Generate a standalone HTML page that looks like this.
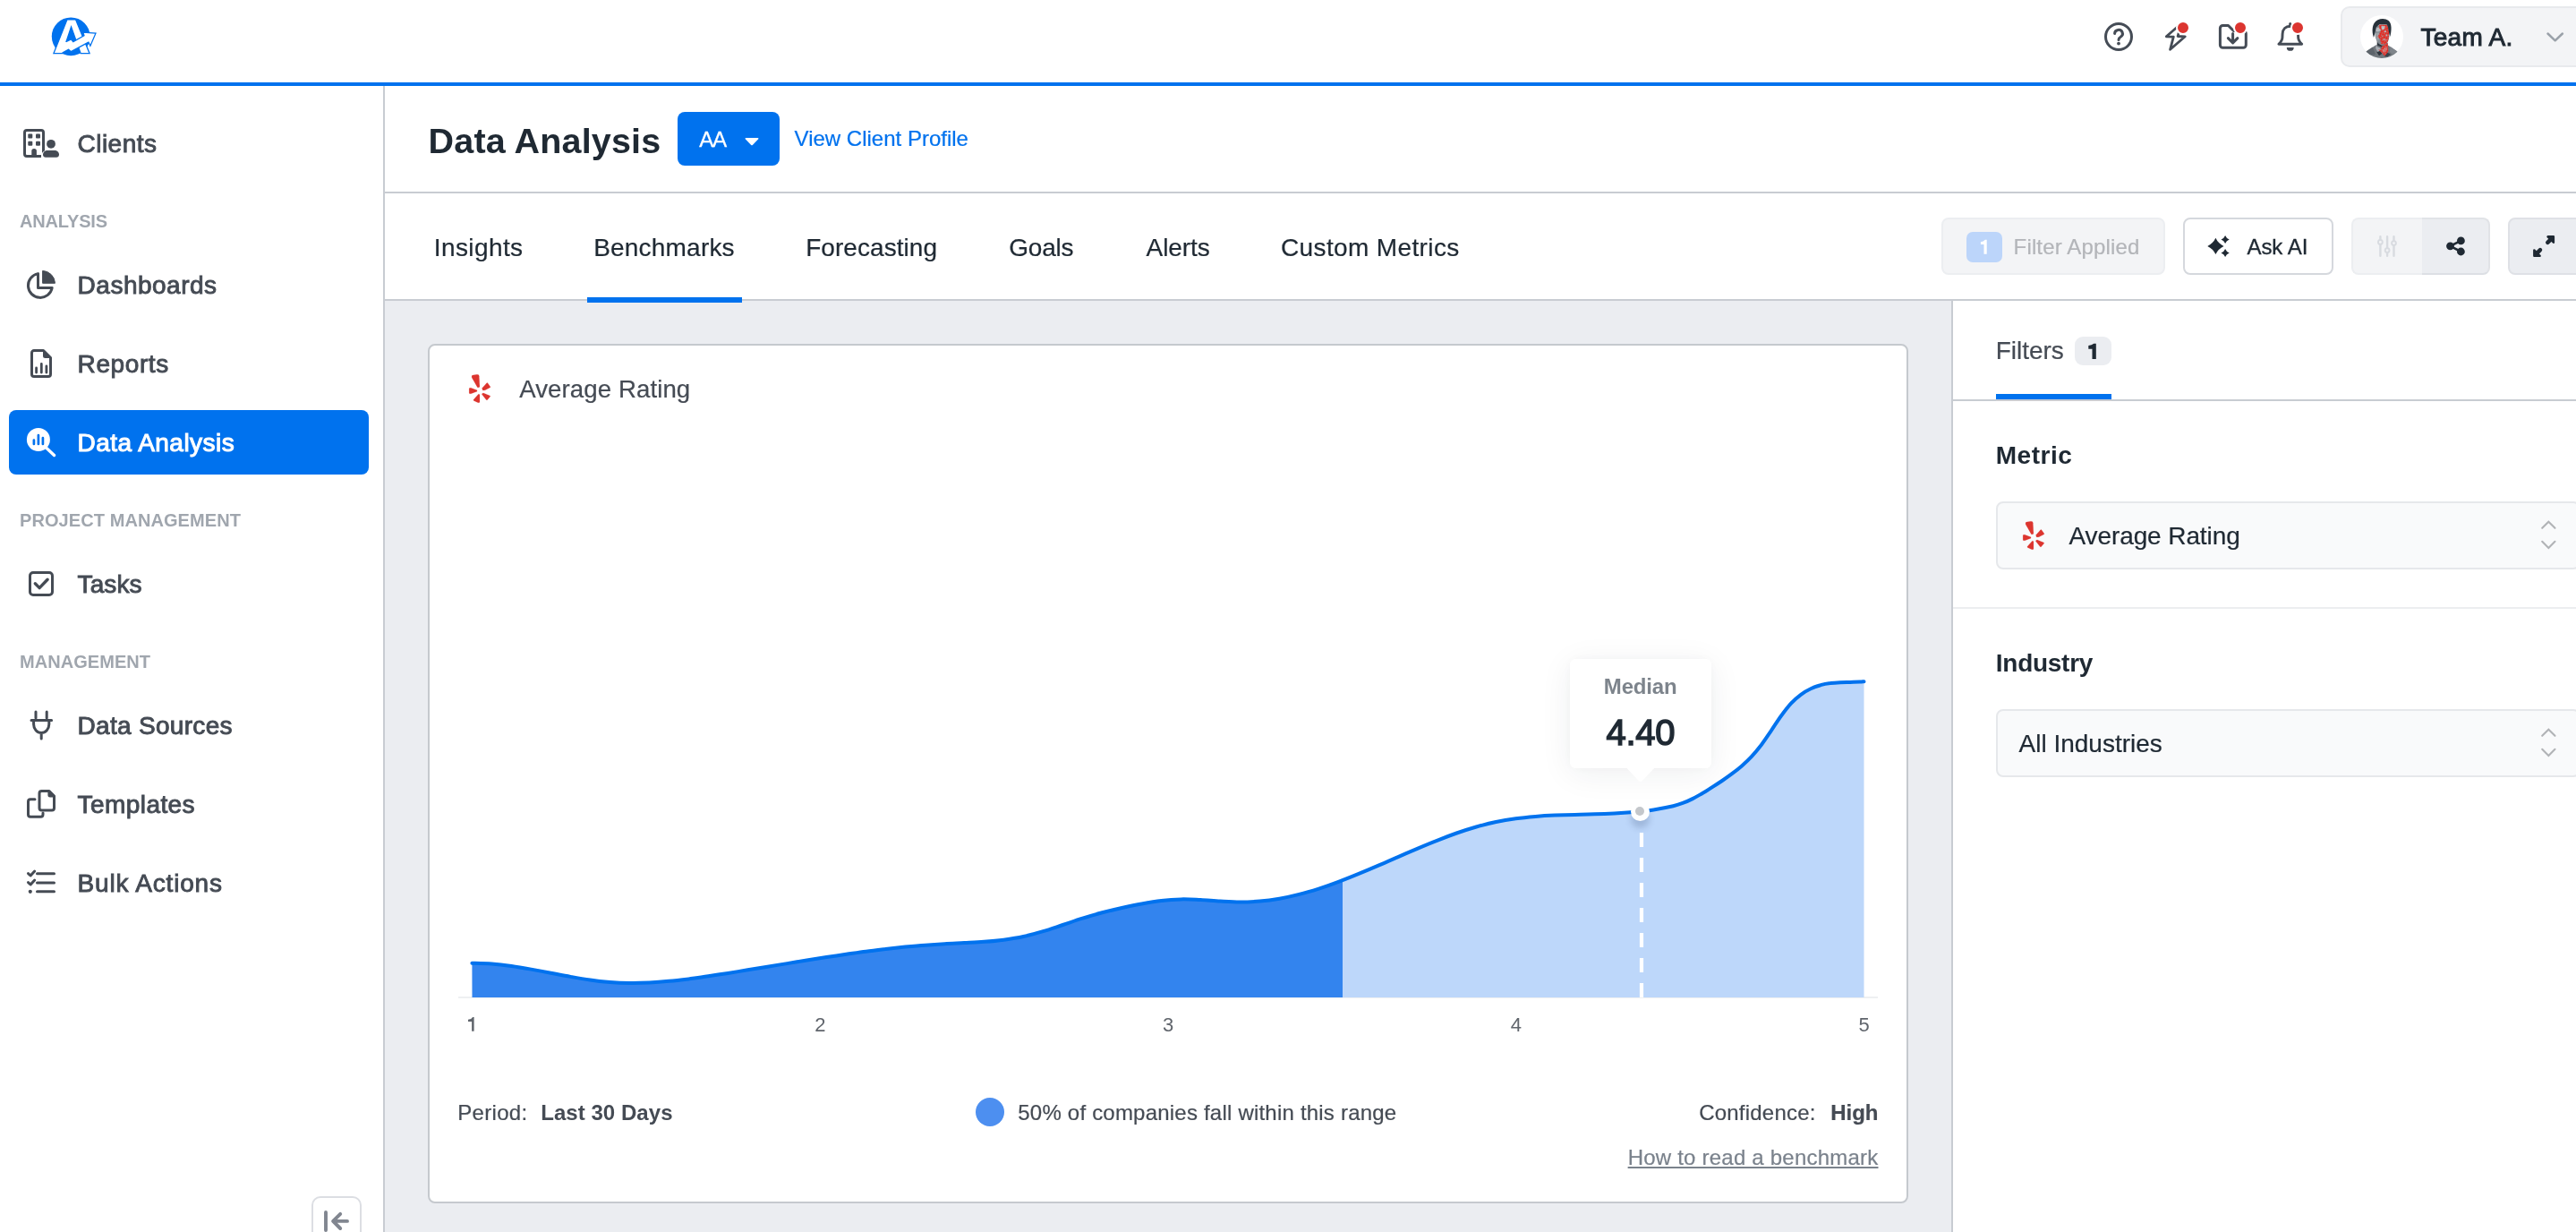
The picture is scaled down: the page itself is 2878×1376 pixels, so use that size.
<!DOCTYPE html><html><head><meta charset="utf-8"><title>Data Analysis</title>
<style>html,body{margin:0;padding:0}body{width:2878px;height:1376px;position:relative;background:#fff;font-family:"Liberation Sans",sans-serif;}div{box-sizing:border-box}#w{position:absolute;left:0;top:0;width:2878px;height:1376px;overflow:hidden;will-change:transform;}</style></head><body><div id="w">
<div style="position:absolute;left:430px;top:336px;width:1750px;height:1040px;background:#ebedf1;"></div>
<div style="position:absolute;left:0px;top:92px;width:2878px;height:4px;background:#0072ee;"></div>
<div style="position:absolute;left:428px;top:96px;width:2px;height:1280px;background:#c8ccd2;"></div>
<div style="position:absolute;left:430px;top:214px;width:2448px;height:2px;background:#c8ccd2;"></div>
<div style="position:absolute;left:430px;top:334px;width:2448px;height:2px;background:#c8ccd2;"></div>
<div style="position:absolute;left:2180px;top:336px;width:2px;height:1040px;background:#c8ccd2;"></div>
<div style="position:absolute;left:2182px;top:336px;width:696px;height:1040px;background:#fff;"></div>
<svg style="position:absolute;left:0px;top:0px;overflow:visible;" width="120" height="92" viewBox="0 0 120 92"><circle cx="79.2" cy="40.8" r="21.4" fill="#0072ee"/><polygon points="59.89,59.66 74.90,21.92 84.64,21.92 100.06,59.66 90.16,59.66 79.53,30.03 69.63,59.66" fill="#fff" stroke="#0072ee" stroke-width="1.3" stroke-linejoin="miter"/><polygon points="73.69,46.67 79.37,43.83 81.80,46.67 93.98,39.77 92.76,36.12 106.96,37.18 100.88,51.14 98.85,47.08 79.37,57.63 76.53,55.19 69.63,59.09 65.97,59.09 71.25,46.67" fill="#fff"/><polyline points="73.69,46.67 79.37,43.83 81.80,46.67 93.98,39.77 92.76,36.12 106.96,37.18 100.88,51.14 98.85,47.08 79.37,57.63 76.53,55.19 69.63,59.09" fill="none" stroke="#0072ee" stroke-width="1.3"/></svg>
<svg style="position:absolute;left:2351px;top:25px;overflow:visible;" width="32" height="32" viewBox="0 0 32 32"><circle cx="16" cy="16" r="14.5" fill="none" stroke="#454c56" stroke-width="3"/><path d="M11.6 12.6a4.4 4.2 0 1 1 6.6 3.6c-1.4 .8-2.2 1.6-2.2 3.2" fill="none" stroke="#454c56" stroke-width="3" stroke-linecap="round"/><circle cx="16" cy="23.6" r="1.9" fill="#454c56"/></svg>
<svg style="position:absolute;left:0px;top:0px;overflow:visible;" width="1" height="1" viewBox="0 0 1 1"><path d="M2420.300 40.800L2437 26.300L2433.100 40.500L2441.300 40.800L2424.600 55.300L2428.300 41.100Z" fill="none" stroke="#454c56" stroke-width="2.800" stroke-linejoin="round" stroke-linecap="round"/></svg>
<svg style="position:absolute;left:2479px;top:25px;overflow:visible;" width="32" height="32" viewBox="0 0 32 32"><path d="M4.400 3.500h6.100l6 6h10.800a3 3 0 0 1 3 3v12.750a3 3 0 0 1-3 3h-22.900a3 3 0 0 1-3-3v-18.750a3 3 0 0 1 3-3z" fill="none" stroke="#454c56" stroke-width="3" stroke-linejoin="round"/><path d="M15.600 12.400v10.200M10.350 17.600l5.250 5.250 5.250-5.250" fill="none" stroke="#454c56" stroke-width="3" stroke-linecap="round" stroke-linejoin="round"/></svg>
<svg style="position:absolute;left:2543px;top:25px;overflow:visible;" width="32" height="32" viewBox="0 0 32 32"><path d="M15.800 4.300c-5.200 0-8.500 3.400-8.700 8.600l-.2 4.300c-.1 2.600-1.500 4.500-4 7.100h25.800c-2.500-2.600-3.900-4.500-4-7.100l-.2-4.300c-.2-5.200-3.500-8.600-8.700-8.600z" fill="none" stroke="#454c56" stroke-width="2.900" stroke-linejoin="round"/><path d="M15.700 1.500v2.400" stroke="#454c56" stroke-width="3" stroke-linecap="round"/><path d="M11.800 27.900h7.900a3.950 3.900 0 0 1-7.900 0z" fill="#454c56"/></svg>
<div style="position:absolute;left:2431px;top:22.8px;width:16px;height:16px;background:#dc3530;border-radius:50%;border:2px solid #fff;"></div>
<div style="position:absolute;left:2495px;top:22.8px;width:16px;height:16px;background:#dc3530;border-radius:50%;border:2px solid #fff;"></div>
<div style="position:absolute;left:2559px;top:22.8px;width:16px;height:16px;background:#dc3530;border-radius:50%;border:2px solid #fff;"></div>
<div style="position:absolute;left:2615px;top:7px;width:300px;height:68px;background:#f3f4f6;border:2px solid #e8eaed;border-radius:10px;"></div>
<div style="position:absolute;left:2637px;top:17px;width:48px;height:48px;background:#fff;border-radius:50%;"></div>
<svg style="position:absolute;left:2637px;top:17px;overflow:visible;" width="48" height="48" viewBox="0 0 48 48"><defs><clipPath id="avc"><circle cx="24" cy="24" r="24"/></clipPath><pattern id="rp" width="2.600" height="2.600" patternUnits="userSpaceOnUse" patternTransform="rotate(18)"><rect width="2.600" height="2.600" fill="#e8261d"/><rect x=".2" y=".3" width="1.150" height="1.150" fill="#9aa0a6"/></pattern></defs><g clip-path="url(#avc)"><path d="M6.2 40.800L17.600 33.200H30.600L41.700 40.800C38 45.500 31 48.500 24 48.500S10 45.500 6.200 40.800Z" fill="#70767c"/><path d="M6.200 40.800L14 35.600L17 44L9.500 44.500Z" fill="#5d646b"/><path d="M33.500 35L41.700 40.800L38 45L33 41Z" fill="#7f858b"/><path d="M17.600 33.200L21 34L24.800 42.600L19.600 41.200L17.200 37Z" fill="#a9adb2"/><path d="M18.300 41.200L22.500 39.800L24.500 42.800L21 45.200Z" fill="#2d353d"/><path d="M26.500 46L30 41.500L34 43.500L30.500 46.500Z" fill="#3a424a"/><path d="M18.600 28H30.300V35.500L24.500 37.500L18.600 35Z" fill="#6a7077"/><path d="M19 30.500C21 33.600 27 34.800 30.300 31V34L25 36L19 33.500Z" fill="#2b333b"/><path d="M24.200 34.500L30.800 31.200L31.400 40.500L27.200 45.800L24.600 42.400L20.200 38.600L23 38.500Z" fill="url(#rp)"/><path d="M27.300 36.500v5M29 35.500v4M25.600 38v3" stroke="#c9ccd0" stroke-width=".7"/><path d="M16.400 13.500C16 20 16.600 26.500 19.200 29.700L22.300 32.700C24 34.200 26.600 34.200 28.200 32.700L30.600 29.700C32.800 26 33 20 32 13.500C29 9.800 19.500 9.800 16.400 13.500Z" fill="#868c92"/><path d="M17.500 14.500L23.500 12.800L24.200 17L19.500 18.500L17.300 17.500Z" fill="#b9bcc1"/><path d="M17.300 20L21 19.500L21.500 24.500L19.800 29L17.800 25Z" fill="#9da2a7"/><path d="M21 10.500L29.800 10.800C32.600 15.500 33 23 30.800 29.300L28.200 32.700L23.200 32L22 26.500L19.400 24L21.300 20.800L23 16.500L20.800 14Z" fill="url(#rp)"/><path d="M23.500 12L27.800 12.200L27 15.800L24 16.200Z" fill="#bcbfc3"/><path d="M26.500 17.500l2.200-.4.300 2-2.200.5zM28.500 21.500l2 .2-.3 1.800-1.800-.4zM25.500 26.500l2.300-.2v1.300l-2.300.3zM24 22.500l1.200.8-.8 1.200zM27.800 28.400l1.200-1.600.6 1.500z" fill="#b3b7bb"/><path d="M15 25C12.600 18 12.800 8.500 19.500 5.200C23.500 3.300 28.500 3.600 31.500 6C35.600 9.200 35 17.500 33.300 24L31.900 18.500L31 13.200L29.600 10.400L21.500 10.200L17.800 13.200L16.600 19Z" fill="#27313a"/></g></svg>
<div style="position:absolute;top:28px;font-size:28px;line-height:28px;color:#1f2933;white-space:nowrap;left:2704.50px;letter-spacing:0.25px;-webkit-text-stroke:1.0px #1f2933;">Team A.</div>
<svg style="position:absolute;left:2845px;top:36px;overflow:visible;" width="20" height="11" viewBox="0 0 20 11"><path d="M1.500 1.500l8.200 7.800 8.200-7.800" fill="none" stroke="#9aa1a9" stroke-width="2.500" stroke-linecap="round" stroke-linejoin="round"/></svg>
<div style="position:absolute;left:10px;top:458px;width:402px;height:72px;background:#0072ee;border-radius:8px;"></div>
<div style="position:absolute;top:147px;font-size:28px;line-height:28px;color:#454b54;white-space:nowrap;left:86.60px;letter-spacing:0.45px;-webkit-text-stroke:0.9px #454b54;">Clients</div>
<div style="position:absolute;top:305px;font-size:28px;line-height:28px;color:#454b54;white-space:nowrap;left:86.60px;letter-spacing:0.5px;-webkit-text-stroke:0.9px #454b54;">Dashboards</div>
<div style="position:absolute;top:393px;font-size:28px;line-height:28px;color:#454b54;white-space:nowrap;left:86.60px;letter-spacing:0.6px;-webkit-text-stroke:0.9px #454b54;">Reports</div>
<div style="position:absolute;top:481px;font-size:28px;line-height:28px;color:#fff;white-space:nowrap;left:86.60px;letter-spacing:0.45px;-webkit-text-stroke:1.05px #fff;">Data Analysis</div>
<div style="position:absolute;top:639px;font-size:28px;line-height:28px;color:#454b54;white-space:nowrap;left:86.60px;letter-spacing:0.1px;-webkit-text-stroke:0.9px #454b54;">Tasks</div>
<div style="position:absolute;top:797px;font-size:28px;line-height:28px;color:#454b54;white-space:nowrap;left:86.60px;letter-spacing:0.3px;-webkit-text-stroke:0.9px #454b54;">Data Sources</div>
<div style="position:absolute;top:885px;font-size:28px;line-height:28px;color:#454b54;white-space:nowrap;left:86.60px;letter-spacing:0.42px;-webkit-text-stroke:0.9px #454b54;">Templates</div>
<div style="position:absolute;top:973px;font-size:28px;line-height:28px;color:#454b54;white-space:nowrap;left:86.60px;letter-spacing:0.8px;-webkit-text-stroke:0.9px #454b54;">Bulk Actions</div>
<div style="position:absolute;top:237px;font-size:20px;line-height:20px;color:#a0a6ae;white-space:nowrap;left:22.00px;font-weight:bold;letter-spacing:-0.18px;">ANALYSIS</div>
<div style="position:absolute;top:571px;font-size:20px;line-height:20px;color:#a0a6ae;white-space:nowrap;left:22.00px;font-weight:bold;letter-spacing:0.08px;">PROJECT MANAGEMENT</div>
<div style="position:absolute;top:729px;font-size:20px;line-height:20px;color:#a0a6ae;white-space:nowrap;left:22.00px;font-weight:bold;letter-spacing:0.06px;">MANAGEMENT</div>
<svg style="position:absolute;left:24px;top:142px;overflow:visible;" width="44" height="36" viewBox="0 0 44 36"><path d="M24.500 31.500V6a2.500 2.500 0 0 0-2.500-2.500h-16a2.500 2.500 0 0 0-2.500 2.500v24a2.500 2.500 0 0 0 2.500 2.500h16" fill="none" stroke="#454b54" stroke-width="3"/><rect x="7.3" y="7.6" width="5" height="5" rx="1" fill="#454b54"/><rect x="7.3" y="15.8" width="5" height="5" rx="1" fill="#454b54"/><rect x="16" y="7.6" width="5" height="5" rx="1" fill="#454b54"/><rect x="16" y="15.8" width="5" height="5" rx="1" fill="#454b54"/><path d="M11.300 33v-6.200a2.800 2.800 0 0 1 5.600 0v6.200z" fill="#454b54"/><circle cx="33" cy="18.800" r="6.800" fill="#fff"/><path d="M22 34c0-6 4-9.500 11-9.500s11 3.500 11 9.500v2h-22z" fill="#fff"/><circle cx="33" cy="18.800" r="4.900" fill="#454b54"/><path d="M24 30.700c0-2.800 2.400-4.700 5-4.700h8c2.600 0 5 1.900 5 4.700 0 1.800-1.300 3-3 3h-12c-1.700 0-3-1.200-3-3z" fill="#454b54"/></svg>
<svg style="position:absolute;left:0px;top:0px;overflow:visible;" width="1" height="1" viewBox="0 0 1 1"><path d="M42.500 305.620A13.500 13.500 0 1 0 58.190 321.500L42.500 321.500Z" fill="none" stroke="#454b54" stroke-width="3" stroke-linejoin="round"/><path d="M47.600 316.300V302.450A14.350 14.350 0 0 1 61.450 316.300Z" fill="#454b54" stroke="#454b54" stroke-width="1" stroke-linejoin="round"/></svg>
<svg style="position:absolute;left:34px;top:390px;overflow:visible;" width="24" height="32" viewBox="0 0 24 32"><path d="M4 1.500h10.500l8 8v18.500a2.500 2.500 0 0 1-2.500 2.500h-16a2.500 2.500 0 0 1-2.500-2.500v-24a2.500 2.500 0 0 1 2.500-2.500z" fill="none" stroke="#454b54" stroke-width="3" stroke-linejoin="round"/><path d="M14 1.500l8.500 8.500h-6a2.500 2.500 0 0 1-2.500-2.500z" fill="#454b54"/><path d="M6.600 21v5M12.300 16.500v9.500M17.900 19v7" stroke="#454b54" stroke-width="2.800" stroke-linecap="round"/></svg>
<svg style="position:absolute;left:28px;top:476px;overflow:visible;" width="36" height="36" viewBox="0 0 36 36"><circle cx="14.900" cy="15" r="13" fill="#fff"/><path d="M24 24.500l8.500 8" stroke="#fff" stroke-width="3.400" stroke-linecap="round"/><path d="M9.900 15.500v4.500M14.900 10v10M19.900 13v7" stroke="#0072ee" stroke-width="2.700" stroke-linecap="round"/></svg>
<svg style="position:absolute;left:32px;top:638px;overflow:visible;" width="28" height="28" viewBox="0 0 28 28"><rect x="1.500" y="1.500" width="25" height="25" rx="3.500" fill="none" stroke="#454b54" stroke-width="3"/><path d="M7.300 13.800l4.800 4.800 9-9.300" fill="none" stroke="#454b54" stroke-width="3.400" stroke-linecap="round" stroke-linejoin="round"/></svg>
<svg style="position:absolute;left:32px;top:792px;overflow:visible;" width="28" height="36" viewBox="0 0 28 36"><path d="M8 3v7M20.200 3v7M3 12.400h22.600M5.600 12.400v4.600a8.600 9.500 0 0 0 17.200 0v-4.600M14.200 27v6" fill="none" stroke="#454b54" stroke-width="3" stroke-linecap="round"/></svg>
<svg style="position:absolute;left:28px;top:880px;overflow:visible;" width="36" height="36" viewBox="0 0 36 36"><path d="M18 3.500h9l5.500 5.500v13.500a2.500 2.500 0 0 1-2.500 2.500h-11.500a2.500 2.500 0 0 1-2.500-2.500v-16.500a2.500 2.500 0 0 1 2.500-2.500z" fill="none" stroke="#454b54" stroke-width="3" stroke-linejoin="round"/><path d="M25.400 2.800l7.800 7.800h-5.300a2.500 2.500 0 0 1-2.500-2.500z" fill="#454b54"/><path d="M11 12.800h-5a2.500 2.500 0 0 0-2.500 2.500v14.500a2.500 2.500 0 0 0 2.500 2.500h11.500a2.500 2.500 0 0 0 2.500-2.500v-1.800" fill="none" stroke="#454b54" stroke-width="3" stroke-linecap="round"/></svg>
<svg style="position:absolute;left:28px;top:968px;overflow:visible;" width="36" height="36" viewBox="0 0 36 36"><path d="M13.500 7.700h19M13.500 17.900h19M13.500 27.800h19" stroke="#454b54" stroke-width="3" stroke-linecap="round"/><path d="M3.500 7.600l2.600 2.400 4.600-5M3.500 17.600l2.600 2.400 4.600-5" fill="none" stroke="#454b54" stroke-width="3" stroke-linecap="round" stroke-linejoin="round"/><circle cx="5.800" cy="27.800" r="2.100" fill="#454b54"/></svg>
<div style="position:absolute;left:348px;top:1336px;width:56px;height:60px;background:#fff;border:2px solid #dcdee3;border-radius:10px;"></div>
<svg style="position:absolute;left:0px;top:0px;overflow:visible;" width="1" height="1" viewBox="0 0 1 1"><path d="M364 1354V1374M388 1363.900H372.500M380.200 1355.800L372.100 1363.900L380.200 1372" fill="none" stroke="#818690" stroke-width="3.900" stroke-linecap="round" stroke-linejoin="round"/></svg>
<div style="position:absolute;top:138px;font-size:39.5px;line-height:39.5px;color:#1f2933;white-space:nowrap;left:478.60px;font-weight:bold;letter-spacing:0.17px;">Data Analysis</div>
<div style="position:absolute;left:757px;top:125px;width:114px;height:60px;background:#0072ee;border-radius:8px;"></div>
<div style="position:absolute;top:144px;font-size:24.2px;line-height:24.2px;color:#fff;white-space:nowrap;left:781.20px;letter-spacing:-1.3px;-webkit-text-stroke:0.3px #fff;">AA</div>
<svg style="position:absolute;left:832px;top:152.5px;overflow:visible;" width="16" height="9.5" viewBox="0 0 16 9.5"><path d="M1.300 1h13.400a.8.800 0 0 1 .6 1.300l-6.500 6.600a1.100 1.100 0 0 1-1.600 0l-6.500-6.600a.8.800 0 0 1 .6-1.300z" fill="#fff"/></svg>
<div style="position:absolute;top:143px;font-size:24px;line-height:24px;color:#0072ee;white-space:nowrap;left:887.60px;-webkit-text-stroke:0.22px #0072ee;">View Client Profile</div>
<div style="position:absolute;top:263px;font-size:28px;line-height:28px;color:#1f2933;white-space:nowrap;left:484.80px;letter-spacing:0.4px;-webkit-text-stroke:0.22px #1f2933;">Insights</div>
<div style="position:absolute;top:263px;font-size:28px;line-height:28px;color:#1f2933;white-space:nowrap;left:663.20px;letter-spacing:0.2px;-webkit-text-stroke:0.22px #1f2933;">Benchmarks</div>
<div style="position:absolute;top:263px;font-size:28px;line-height:28px;color:#1f2933;white-space:nowrap;left:900.20px;letter-spacing:0.05px;-webkit-text-stroke:0.22px #1f2933;">Forecasting</div>
<div style="position:absolute;top:263px;font-size:28px;line-height:28px;color:#1f2933;white-space:nowrap;left:1127.20px;letter-spacing:-0.2px;-webkit-text-stroke:0.22px #1f2933;">Goals</div>
<div style="position:absolute;top:263px;font-size:28px;line-height:28px;color:#1f2933;white-space:nowrap;left:1280.50px;letter-spacing:-0.05px;-webkit-text-stroke:0.22px #1f2933;">Alerts</div>
<div style="position:absolute;top:263px;font-size:28px;line-height:28px;color:#1f2933;white-space:nowrap;left:1431.00px;letter-spacing:0.37px;-webkit-text-stroke:0.22px #1f2933;">Custom Metrics</div>
<div style="position:absolute;left:656px;top:332px;width:173px;height:6px;background:#0072ee;"></div>
<div style="position:absolute;left:2169px;top:243px;width:250px;height:64px;background:#f3f4f6;border:2px solid #eceef1;border-radius:8px;"></div>
<div style="position:absolute;left:2197px;top:259px;width:40px;height:34px;background:#bcd5fa;border-radius:7px;"></div>
<svg style="position:absolute;left:0px;top:0px;overflow:visible;" width="1" height="1" viewBox="0 0 1 1"><path d="M2219.70 267.80L2219.70 283.80L2216.50 283.80L2216.50 273.08L2212.90 273.08L2212.90 270.36Q2216.02 270.23 2217.84 267.80Z" fill="#fff"/></svg>
<div style="position:absolute;top:264px;font-size:24px;line-height:24px;color:#b3b5b9;white-space:nowrap;left:2249.60px;letter-spacing:0.15px;-webkit-text-stroke:0.22px #b3b5b9;">Filter Applied</div>
<div style="position:absolute;left:2439px;top:243px;width:168px;height:64px;background:#fff;border:2px solid #d5d8dd;border-radius:8px;"></div>
<svg style="position:absolute;left:0px;top:0px;overflow:visible;" width="1" height="1" viewBox="0 0 1 1"><path d="M2475.40 265.80Q2478.30 272.00 2484.50 274.90Q2478.30 277.80 2475.40 284.00Q2472.50 277.80 2466.30 274.90Q2472.50 272.00 2475.40 265.80ZM2486.10 262.90Q2487.40 266.20 2490.70 267.50Q2487.40 268.80 2486.10 272.10Q2484.80 268.80 2481.50 267.50Q2484.80 266.20 2486.10 262.90ZM2486.10 277.90Q2487.40 281.20 2490.70 282.50Q2487.40 283.80 2486.10 287.10Q2484.80 283.80 2481.50 282.50Q2484.80 281.20 2486.10 277.90Z" fill="#1f2933"/></svg>
<div style="position:absolute;top:264px;font-size:24px;line-height:24px;color:#1f2933;white-space:nowrap;left:2510.40px;letter-spacing:-0.02px;-webkit-text-stroke:0.35px #1f2933;">Ask AI</div>
<div style="position:absolute;left:2627px;top:243px;width:80px;height:64px;background:#f3f4f6;border:2px solid #eceef1;border-right:none;border-radius:8px 0 0 8px;"></div>
<div style="position:absolute;left:2706px;top:243px;width:76px;height:64px;background:#ebedf1;border:2px solid #e1e3e7;border-left:none;border-bottom-color:#dcdfe4;border-radius:0 8px 8px 0;"></div>
<svg style="position:absolute;left:2654px;top:262px;overflow:visible;" width="26" height="26" viewBox="0 0 26 26"><path d="M5.400 2.300v21.400M13.100 2.300v21.400M20.500 2.300v21.400" stroke="#d8dbe0" stroke-width="2.400" stroke-linecap="round"/><circle cx="5.400" cy="8.400" r="2.400" fill="#f3f4f6" stroke="#d8dbe0" stroke-width="1.900"/><circle cx="13.100" cy="17.600" r="2.400" fill="#f3f4f6" stroke="#d8dbe0" stroke-width="1.900"/><circle cx="20.500" cy="9.600" r="2.400" fill="#f3f4f6" stroke="#d8dbe0" stroke-width="1.900"/></svg>
<svg style="position:absolute;left:0px;top:0px;overflow:visible;" width="1" height="1" viewBox="0 0 1 1"><path d="M2749.400 268.900L2737.500 274.800L2749.400 281" fill="none" stroke="#1f2933" stroke-width="2.600"/><circle cx="2749.400" cy="268.900" r="4.400" fill="#1f2933"/><circle cx="2737.500" cy="274.850" r="4.400" fill="#1f2933"/><circle cx="2749.400" cy="281" r="4.400" fill="#1f2933"/></svg>
<div style="position:absolute;left:2802px;top:243px;width:100px;height:64px;background:#ebedf1;border:2px solid #dfe1e6;border-radius:8px;"></div>
<svg style="position:absolute;left:0px;top:0px;overflow:visible;" width="1" height="1" viewBox="0 0 1 1"><g fill="#1f2933" stroke="#1f2933" stroke-linejoin="round" stroke-linecap="round"><path d="M2846.500 264.300h6.400v6.400z" stroke-width="2.400"/><path d="M2831.300 279.400v6.400h6.400z" stroke-width="2.400"/><path d="M2846.300 270.900l4.300-4.300M2838 279.200l-4.400 4.400" stroke-width="4.500" fill="none"/></g></svg>
<div style="position:absolute;left:478px;top:384px;width:1654px;height:960px;background:#fff;border:2px solid #c5c9ce;border-radius:8px;"></div>
<svg style="position:absolute;left:0px;top:0px;overflow:visible;" width="1" height="1" viewBox="0 0 1 1"><polygon points="526.98,419.76 528.20,419.03 533.07,418.14 534.89,418.75 535.30,420.17 535.91,431.94 535.10,432.83 533.47,432.67 527.18,421.79" fill="#dc352f" stroke="#dc352f" stroke-width="0.15" stroke-linejoin="round"/><polygon points="524.14,433.96 524.63,433.23 526.17,433.15 532.86,435.79 533.15,436.60 532.86,437.29 526.17,439.72 524.63,439.72 524.14,439.03" fill="#dc352f" stroke="#dc352f" stroke-width="0.15" stroke-linejoin="round"/><polygon points="534.49,440.13 535.50,440.33 535.91,441.06 535.91,449.18 535.10,449.87 534.08,449.78 529.21,447.55 528.93,446.54" fill="#dc352f" stroke="#dc352f" stroke-width="0.15" stroke-linejoin="round"/><polygon points="538.26,440.25 539.07,439.24 540.17,439.03 547.47,442.00 547.79,442.81 544.43,446.74 543.41,446.86" fill="#dc352f" stroke="#dc352f" stroke-width="0.15" stroke-linejoin="round"/><polygon points="538.87,435.38 538.87,433.35 543.82,427.68 544.63,427.59 547.87,431.94 547.67,432.83 541.99,435.67 539.96,435.91" fill="#dc352f" stroke="#dc352f" stroke-width="0.15" stroke-linejoin="round"/></svg>
<div style="position:absolute;top:421px;font-size:27.6px;line-height:27.6px;color:#454b54;white-space:nowrap;left:580.20px;letter-spacing:0.1px;-webkit-text-stroke:0.22px #454b54;">Average Rating</div>
<svg style="position:absolute;left:0px;top:0px;overflow:visible;" width="2878" height="1376" viewBox="0 0 2878 1376"><defs><clipPath id="cl"><rect x="0" y="0" width="1500" height="1376"/></clipPath><clipPath id="cr"><rect x="1500" y="0" width="1378" height="1376"/></clipPath></defs><rect x="512" y="1113" width="1586" height="2" fill="#eef0f2"/><path d="M527.4 1075.8C531.1 1075.9 542.1 1076.0 549.4 1076.5C556.7 1077.1 564.1 1078.0 571.4 1079.0C578.7 1080.0 586.1 1081.3 593.4 1082.6C600.7 1083.9 608.1 1085.4 615.4 1086.7C622.7 1088.1 630.1 1089.6 637.4 1090.9C644.7 1092.2 652.1 1093.5 659.4 1094.5C666.7 1095.6 674.1 1096.4 681.4 1097.0C688.7 1097.6 696.1 1097.9 703.4 1097.9C710.7 1098.0 718.1 1097.8 725.4 1097.5C732.7 1097.1 740.1 1096.5 747.4 1095.8C754.7 1095.2 762.1 1094.3 769.4 1093.4C776.7 1092.4 784.1 1091.4 791.4 1090.3C798.7 1089.2 806.1 1088.0 813.4 1086.9C820.7 1085.7 828.1 1084.5 835.4 1083.3C842.7 1082.1 850.1 1080.9 857.4 1079.7C864.7 1078.5 872.1 1077.3 879.4 1076.1C886.7 1074.9 894.1 1073.7 901.4 1072.5C908.7 1071.4 916.1 1070.2 923.4 1069.1C930.7 1068.0 938.1 1066.9 945.4 1065.8C952.7 1064.8 960.1 1063.7 967.4 1062.8C974.7 1061.8 982.1 1060.9 989.4 1060.0C996.7 1059.2 1004.1 1058.4 1011.4 1057.6C1018.7 1056.9 1026.1 1056.2 1033.4 1055.7C1040.7 1055.1 1048.1 1054.6 1055.4 1054.2C1062.7 1053.7 1070.1 1053.5 1077.4 1053.1C1084.7 1052.7 1092.1 1052.4 1099.4 1051.8C1106.7 1051.3 1114.1 1050.7 1121.4 1049.7C1128.7 1048.7 1136.1 1047.6 1143.4 1046.0C1150.7 1044.4 1158.1 1042.4 1165.4 1040.2C1172.7 1038.0 1180.1 1035.4 1187.4 1033.0C1194.7 1030.6 1202.1 1027.9 1209.4 1025.7C1216.7 1023.4 1224.1 1021.3 1231.4 1019.3C1238.7 1017.4 1246.1 1015.6 1253.4 1014.0C1260.7 1012.4 1268.1 1010.8 1275.4 1009.5C1282.7 1008.1 1290.1 1006.7 1297.4 1005.9C1304.7 1005.0 1312.1 1004.5 1319.4 1004.4C1326.7 1004.2 1334.1 1004.7 1341.4 1005.0C1348.7 1005.4 1356.1 1006.2 1363.4 1006.6C1370.7 1007.0 1378.1 1007.5 1385.4 1007.5C1392.7 1007.5 1400.1 1007.2 1407.4 1006.6C1414.7 1005.9 1422.1 1004.9 1429.4 1003.7C1436.7 1002.4 1444.1 1000.8 1451.4 998.9C1458.7 997.1 1466.1 994.9 1473.4 992.6C1480.7 990.3 1488.1 987.7 1495.4 984.9C1502.7 982.2 1510.1 979.2 1517.4 976.2C1524.7 973.2 1532.1 970.1 1539.4 966.9C1546.7 963.8 1554.1 960.5 1561.4 957.3C1568.7 954.1 1576.1 950.9 1583.4 947.8C1590.7 944.7 1598.1 941.6 1605.4 938.8C1612.7 935.9 1620.1 933.1 1627.4 930.5C1634.7 928.0 1642.1 925.6 1649.4 923.5C1656.7 921.4 1664.1 919.5 1671.4 918.0C1678.7 916.5 1686.1 915.3 1693.4 914.3C1700.7 913.2 1708.1 912.5 1715.4 911.9C1722.7 911.3 1730.1 910.9 1737.4 910.6C1744.7 910.3 1752.1 910.1 1759.4 909.9C1766.7 909.6 1774.1 909.5 1781.4 909.3C1788.7 909.1 1796.1 908.8 1803.4 908.5C1810.7 908.1 1818.1 907.6 1825.4 907.0C1832.7 906.3 1840.1 905.5 1847.4 904.4C1854.7 903.2 1864.0 901.4 1869.4 900.2C1874.8 898.9 1876.4 898.3 1880.0 896.9C1883.6 895.6 1887.3 894.0 1891.0 892.1C1894.7 890.3 1898.3 888.1 1902.0 886.0C1905.7 883.8 1909.3 881.5 1913.0 879.1C1916.7 876.8 1920.3 874.5 1924.0 872.0C1927.7 869.5 1931.3 867.0 1935.0 864.2C1938.7 861.4 1942.3 858.6 1946.0 855.4C1949.7 852.1 1953.3 848.8 1957.0 844.8C1960.7 840.9 1964.3 836.5 1968.0 831.7C1971.7 826.9 1975.3 821.2 1979.0 815.8C1982.7 810.4 1986.3 804.5 1990.0 799.5C1993.7 794.5 1997.3 789.7 2001.0 785.7C2004.7 781.7 2008.3 778.5 2012.0 775.8C2015.7 773.0 2019.3 770.9 2023.0 769.2C2026.7 767.4 2030.3 766.2 2034.0 765.2C2037.7 764.1 2041.3 763.5 2045.0 763.1C2048.7 762.6 2052.3 762.4 2056.0 762.2C2059.7 762.0 2063.3 762.0 2067.0 761.9C2070.7 761.8 2075.4 761.6 2078.0 761.5C2080.6 761.4 2081.8 761.2 2082.5 761.2L2082.5 1114L527.5 1114Z" fill="#3384ee" clip-path="url(#cl)"/><path d="M527.4 1075.8C531.1 1075.9 542.1 1076.0 549.4 1076.5C556.7 1077.1 564.1 1078.0 571.4 1079.0C578.7 1080.0 586.1 1081.3 593.4 1082.6C600.7 1083.9 608.1 1085.4 615.4 1086.7C622.7 1088.1 630.1 1089.6 637.4 1090.9C644.7 1092.2 652.1 1093.5 659.4 1094.5C666.7 1095.6 674.1 1096.4 681.4 1097.0C688.7 1097.6 696.1 1097.9 703.4 1097.9C710.7 1098.0 718.1 1097.8 725.4 1097.5C732.7 1097.1 740.1 1096.5 747.4 1095.8C754.7 1095.2 762.1 1094.3 769.4 1093.4C776.7 1092.4 784.1 1091.4 791.4 1090.3C798.7 1089.2 806.1 1088.0 813.4 1086.9C820.7 1085.7 828.1 1084.5 835.4 1083.3C842.7 1082.1 850.1 1080.9 857.4 1079.7C864.7 1078.5 872.1 1077.3 879.4 1076.1C886.7 1074.9 894.1 1073.7 901.4 1072.5C908.7 1071.4 916.1 1070.2 923.4 1069.1C930.7 1068.0 938.1 1066.9 945.4 1065.8C952.7 1064.8 960.1 1063.7 967.4 1062.8C974.7 1061.8 982.1 1060.9 989.4 1060.0C996.7 1059.2 1004.1 1058.4 1011.4 1057.6C1018.7 1056.9 1026.1 1056.2 1033.4 1055.7C1040.7 1055.1 1048.1 1054.6 1055.4 1054.2C1062.7 1053.7 1070.1 1053.5 1077.4 1053.1C1084.7 1052.7 1092.1 1052.4 1099.4 1051.8C1106.7 1051.3 1114.1 1050.7 1121.4 1049.7C1128.7 1048.7 1136.1 1047.6 1143.4 1046.0C1150.7 1044.4 1158.1 1042.4 1165.4 1040.2C1172.7 1038.0 1180.1 1035.4 1187.4 1033.0C1194.7 1030.6 1202.1 1027.9 1209.4 1025.7C1216.7 1023.4 1224.1 1021.3 1231.4 1019.3C1238.7 1017.4 1246.1 1015.6 1253.4 1014.0C1260.7 1012.4 1268.1 1010.8 1275.4 1009.5C1282.7 1008.1 1290.1 1006.7 1297.4 1005.9C1304.7 1005.0 1312.1 1004.5 1319.4 1004.4C1326.7 1004.2 1334.1 1004.7 1341.4 1005.0C1348.7 1005.4 1356.1 1006.2 1363.4 1006.6C1370.7 1007.0 1378.1 1007.5 1385.4 1007.5C1392.7 1007.5 1400.1 1007.2 1407.4 1006.6C1414.7 1005.9 1422.1 1004.9 1429.4 1003.7C1436.7 1002.4 1444.1 1000.8 1451.4 998.9C1458.7 997.1 1466.1 994.9 1473.4 992.6C1480.7 990.3 1488.1 987.7 1495.4 984.9C1502.7 982.2 1510.1 979.2 1517.4 976.2C1524.7 973.2 1532.1 970.1 1539.4 966.9C1546.7 963.8 1554.1 960.5 1561.4 957.3C1568.7 954.1 1576.1 950.9 1583.4 947.8C1590.7 944.7 1598.1 941.6 1605.4 938.8C1612.7 935.9 1620.1 933.1 1627.4 930.5C1634.7 928.0 1642.1 925.6 1649.4 923.5C1656.7 921.4 1664.1 919.5 1671.4 918.0C1678.7 916.5 1686.1 915.3 1693.4 914.3C1700.7 913.2 1708.1 912.5 1715.4 911.9C1722.7 911.3 1730.1 910.9 1737.4 910.6C1744.7 910.3 1752.1 910.1 1759.4 909.9C1766.7 909.6 1774.1 909.5 1781.4 909.3C1788.7 909.1 1796.1 908.8 1803.4 908.5C1810.7 908.1 1818.1 907.6 1825.4 907.0C1832.7 906.3 1840.1 905.5 1847.4 904.4C1854.7 903.2 1864.0 901.4 1869.4 900.2C1874.8 898.9 1876.4 898.3 1880.0 896.9C1883.6 895.6 1887.3 894.0 1891.0 892.1C1894.7 890.3 1898.3 888.1 1902.0 886.0C1905.7 883.8 1909.3 881.5 1913.0 879.1C1916.7 876.8 1920.3 874.5 1924.0 872.0C1927.7 869.5 1931.3 867.0 1935.0 864.2C1938.7 861.4 1942.3 858.6 1946.0 855.4C1949.7 852.1 1953.3 848.8 1957.0 844.8C1960.7 840.9 1964.3 836.5 1968.0 831.7C1971.7 826.9 1975.3 821.2 1979.0 815.8C1982.7 810.4 1986.3 804.5 1990.0 799.5C1993.7 794.5 1997.3 789.7 2001.0 785.7C2004.7 781.7 2008.3 778.5 2012.0 775.8C2015.7 773.0 2019.3 770.9 2023.0 769.2C2026.7 767.4 2030.3 766.2 2034.0 765.2C2037.7 764.1 2041.3 763.5 2045.0 763.1C2048.7 762.6 2052.3 762.4 2056.0 762.2C2059.7 762.0 2063.3 762.0 2067.0 761.9C2070.7 761.8 2075.4 761.6 2078.0 761.5C2080.6 761.4 2081.8 761.2 2082.5 761.2L2082.5 1114L527.5 1114Z" fill="#bdd7fa" clip-path="url(#cr)"/><path d="M527.4 1075.8C531.1 1075.9 542.1 1076.0 549.4 1076.5C556.7 1077.1 564.1 1078.0 571.4 1079.0C578.7 1080.0 586.1 1081.3 593.4 1082.6C600.7 1083.9 608.1 1085.4 615.4 1086.7C622.7 1088.1 630.1 1089.6 637.4 1090.9C644.7 1092.2 652.1 1093.5 659.4 1094.5C666.7 1095.6 674.1 1096.4 681.4 1097.0C688.7 1097.6 696.1 1097.9 703.4 1097.9C710.7 1098.0 718.1 1097.8 725.4 1097.5C732.7 1097.1 740.1 1096.5 747.4 1095.8C754.7 1095.2 762.1 1094.3 769.4 1093.4C776.7 1092.4 784.1 1091.4 791.4 1090.3C798.7 1089.2 806.1 1088.0 813.4 1086.9C820.7 1085.7 828.1 1084.5 835.4 1083.3C842.7 1082.1 850.1 1080.9 857.4 1079.7C864.7 1078.5 872.1 1077.3 879.4 1076.1C886.7 1074.9 894.1 1073.7 901.4 1072.5C908.7 1071.4 916.1 1070.2 923.4 1069.1C930.7 1068.0 938.1 1066.9 945.4 1065.8C952.7 1064.8 960.1 1063.7 967.4 1062.8C974.7 1061.8 982.1 1060.9 989.4 1060.0C996.7 1059.2 1004.1 1058.4 1011.4 1057.6C1018.7 1056.9 1026.1 1056.2 1033.4 1055.7C1040.7 1055.1 1048.1 1054.6 1055.4 1054.2C1062.7 1053.7 1070.1 1053.5 1077.4 1053.1C1084.7 1052.7 1092.1 1052.4 1099.4 1051.8C1106.7 1051.3 1114.1 1050.7 1121.4 1049.7C1128.7 1048.7 1136.1 1047.6 1143.4 1046.0C1150.7 1044.4 1158.1 1042.4 1165.4 1040.2C1172.7 1038.0 1180.1 1035.4 1187.4 1033.0C1194.7 1030.6 1202.1 1027.9 1209.4 1025.7C1216.7 1023.4 1224.1 1021.3 1231.4 1019.3C1238.7 1017.4 1246.1 1015.6 1253.4 1014.0C1260.7 1012.4 1268.1 1010.8 1275.4 1009.5C1282.7 1008.1 1290.1 1006.7 1297.4 1005.9C1304.7 1005.0 1312.1 1004.5 1319.4 1004.4C1326.7 1004.2 1334.1 1004.7 1341.4 1005.0C1348.7 1005.4 1356.1 1006.2 1363.4 1006.6C1370.7 1007.0 1378.1 1007.5 1385.4 1007.5C1392.7 1007.5 1400.1 1007.2 1407.4 1006.6C1414.7 1005.9 1422.1 1004.9 1429.4 1003.7C1436.7 1002.4 1444.1 1000.8 1451.4 998.9C1458.7 997.1 1466.1 994.9 1473.4 992.6C1480.7 990.3 1488.1 987.7 1495.4 984.9C1502.7 982.2 1510.1 979.2 1517.4 976.2C1524.7 973.2 1532.1 970.1 1539.4 966.9C1546.7 963.8 1554.1 960.5 1561.4 957.3C1568.7 954.1 1576.1 950.9 1583.4 947.8C1590.7 944.7 1598.1 941.6 1605.4 938.8C1612.7 935.9 1620.1 933.1 1627.4 930.5C1634.7 928.0 1642.1 925.6 1649.4 923.5C1656.7 921.4 1664.1 919.5 1671.4 918.0C1678.7 916.5 1686.1 915.3 1693.4 914.3C1700.7 913.2 1708.1 912.5 1715.4 911.9C1722.7 911.3 1730.1 910.9 1737.4 910.6C1744.7 910.3 1752.1 910.1 1759.4 909.9C1766.7 909.6 1774.1 909.5 1781.4 909.3C1788.7 909.1 1796.1 908.8 1803.4 908.5C1810.7 908.1 1818.1 907.6 1825.4 907.0C1832.7 906.3 1840.1 905.5 1847.4 904.4C1854.7 903.2 1864.0 901.4 1869.4 900.2C1874.8 898.9 1876.4 898.3 1880.0 896.9C1883.6 895.6 1887.3 894.0 1891.0 892.1C1894.7 890.3 1898.3 888.1 1902.0 886.0C1905.7 883.8 1909.3 881.5 1913.0 879.1C1916.7 876.8 1920.3 874.5 1924.0 872.0C1927.7 869.5 1931.3 867.0 1935.0 864.2C1938.7 861.4 1942.3 858.6 1946.0 855.4C1949.7 852.1 1953.3 848.8 1957.0 844.8C1960.7 840.9 1964.3 836.5 1968.0 831.7C1971.7 826.9 1975.3 821.2 1979.0 815.8C1982.7 810.4 1986.3 804.5 1990.0 799.5C1993.7 794.5 1997.3 789.7 2001.0 785.7C2004.7 781.7 2008.3 778.5 2012.0 775.8C2015.7 773.0 2019.3 770.9 2023.0 769.2C2026.7 767.4 2030.3 766.2 2034.0 765.2C2037.7 764.1 2041.3 763.5 2045.0 763.1C2048.7 762.6 2052.3 762.4 2056.0 762.2C2059.7 762.0 2063.3 762.0 2067.0 761.9C2070.7 761.8 2075.4 761.6 2078.0 761.5C2080.6 761.4 2081.8 761.2 2082.5 761.2" fill="none" stroke="#0072ee" stroke-width="4" stroke-linecap="round" stroke-linejoin="round"/><path d="M1834 1114V928" stroke="#fff" stroke-width="4.200" stroke-dasharray="16 12"/></svg>
<div style="position:absolute;left:1821.6px;top:895.5px;width:21px;height:21px;background:#fff;border-radius:50%;box-shadow:0 8px 7px rgba(40,60,100,.2);"></div>
<div style="position:absolute;left:1827.1px;top:901px;width:10px;height:10px;background:#c4c7cb;border-radius:50%;"></div>
<div style="position:absolute;left:1754px;top:736px;width:158px;height:122px;background:#fff;border-radius:6px;box-shadow:0 6px 36px rgba(31,41,51,.07),0 0 14px rgba(31,41,51,.035);"></div>
<svg style="position:absolute;left:0px;top:0px;overflow:visible;" width="1" height="1" viewBox="0 0 1 1"><path d="M1817 857.500h31.600l-13.800 14.600a2.800 2.800 0 0 1-4 0z" fill="#fff"/></svg>
<div style="position:absolute;top:755px;font-size:24px;line-height:24px;color:#7d848c;white-space:nowrap;left:1791.80px;font-weight:bold;letter-spacing:-0.15px;">Median</div>
<div style="position:absolute;top:798px;font-size:40px;line-height:40px;color:#1f2933;white-space:nowrap;left:1794.60px;letter-spacing:-0.3px;-webkit-text-stroke:1.5px #1f2933;">4.40</div>
<svg style="position:absolute;left:0px;top:0px;overflow:visible;" width="1" height="1" viewBox="0 0 1 1"><path d="M529.60 1136.10L529.60 1151.80L527.10 1151.80L527.10 1141.05L523.00 1141.05L523.00 1138.77Q526.73 1138.64 528.15 1136.10Z" fill="#60656c"/></svg>
<div style="position:absolute;left:886.25px;width:60px;text-align:center;top:1134px;font-size:22px;line-height:22px;color:#60656c">2</div>
<div style="position:absolute;left:1275px;width:60px;text-align:center;top:1134px;font-size:22px;line-height:22px;color:#60656c">3</div>
<div style="position:absolute;left:1663.75px;width:60px;text-align:center;top:1134px;font-size:22px;line-height:22px;color:#60656c">4</div>
<div style="position:absolute;left:2052.5px;width:60px;text-align:center;top:1134px;font-size:22px;line-height:22px;color:#60656c">5</div>
<div style="position:absolute;top:1231px;font-size:24px;line-height:24px;color:#454b54;white-space:nowrap;left:511.30px;letter-spacing:0.3px;-webkit-text-stroke:0.22px #454b54;">Period:</div>
<div style="position:absolute;top:1231px;font-size:24px;line-height:24px;color:#454b54;white-space:nowrap;left:604.20px;font-weight:bold;letter-spacing:0.05px;">Last 30 Days</div>
<div style="position:absolute;left:1090px;top:1226px;width:32px;height:32px;background:#4d8ff0;border-radius:50%;"></div>
<div style="position:absolute;top:1231px;font-size:24px;line-height:24px;color:#454b54;white-space:nowrap;left:1137.30px;letter-spacing:0.21px;-webkit-text-stroke:0.22px #454b54;">50% of companies fall within this range</div>
<div style="position:absolute;top:1231px;font-size:24px;line-height:24px;color:#454b54;white-space:nowrap;right:779.50px;-webkit-text-stroke:0.22px #454b54;"><span style="letter-spacing:.22px">Confidence:</span><span style="display:inline-block;width:16.5px"></span><b>High</b></div>
<div style="position:absolute;top:1281px;font-size:24px;line-height:24px;color:#7a828c;white-space:nowrap;right:779.50px;letter-spacing:0.22px;-webkit-text-stroke:0.22px #7a828c;text-decoration:underline;text-underline-offset:1.800px;text-decoration-thickness:1.900px;">How to read a benchmark</div>
<div style="position:absolute;top:378px;font-size:28px;line-height:28px;color:#454b54;white-space:nowrap;left:2229.80px;letter-spacing:-0.05px;-webkit-text-stroke:0.22px #454b54;">Filters</div>
<div style="position:absolute;left:2318px;top:376px;width:41px;height:32px;background:#ebedf1;border-radius:9px;"></div>
<svg style="position:absolute;left:0px;top:0px;overflow:visible;" width="1" height="1" viewBox="0 0 1 1"><path d="M2341.80 383.80L2341.80 401.00L2337.50 401.00L2337.50 389.82L2333.30 389.82L2333.30 386.04Q2336.86 385.92 2339.31 383.80Z" fill="#1f2933"/></svg>
<div style="position:absolute;left:2230px;top:440px;width:129px;height:6px;background:#0072ee;"></div>
<div style="position:absolute;left:2182px;top:446px;width:696px;height:2px;background:#c8ccd2;"></div>
<div style="position:absolute;top:495px;font-size:28px;line-height:28px;color:#1f2933;white-space:nowrap;left:2229.80px;font-weight:bold;letter-spacing:0.5px;">Metric</div>
<div style="position:absolute;left:2230px;top:560px;width:653px;height:76px;background:#f9fafb;border:2px solid #e6e8eb;border-radius:8px;"></div>
<svg style="position:absolute;left:0px;top:0px;overflow:visible;" width="1" height="1" viewBox="0 0 1 1"><polygon points="2262.98,583.76 2264.20,583.03 2269.07,582.14 2270.89,582.75 2271.30,584.17 2271.91,595.94 2271.10,596.83 2269.47,596.67 2263.18,585.79" fill="#dc352f" stroke="#dc352f" stroke-width="0.15" stroke-linejoin="round"/><polygon points="2260.14,597.96 2260.63,597.23 2262.17,597.15 2268.86,599.79 2269.15,600.60 2268.86,601.29 2262.17,603.72 2260.63,603.72 2260.14,603.03" fill="#dc352f" stroke="#dc352f" stroke-width="0.15" stroke-linejoin="round"/><polygon points="2270.49,604.13 2271.50,604.33 2271.91,605.06 2271.91,613.18 2271.10,613.87 2270.08,613.78 2265.21,611.55 2264.93,610.54" fill="#dc352f" stroke="#dc352f" stroke-width="0.15" stroke-linejoin="round"/><polygon points="2274.26,604.25 2275.07,603.24 2276.17,603.03 2283.47,606.00 2283.79,606.81 2280.43,610.74 2279.41,610.86" fill="#dc352f" stroke="#dc352f" stroke-width="0.15" stroke-linejoin="round"/><polygon points="2274.87,599.38 2274.87,597.35 2279.82,591.68 2280.63,591.59 2283.87,595.94 2283.67,596.83 2277.99,599.67 2275.96,599.91" fill="#dc352f" stroke="#dc352f" stroke-width="0.15" stroke-linejoin="round"/></svg>
<div style="position:absolute;top:585px;font-size:28px;line-height:28px;color:#1f2933;white-space:nowrap;left:2311.50px;letter-spacing:-0.1px;-webkit-text-stroke:0.22px #1f2933;">Average Rating</div>
<svg style="position:absolute;left:0px;top:0px;overflow:visible;" width="1" height="1" viewBox="0 0 1 1"><path d="M2840.200 589.80L2847.350 582.65L2854.500 589.80M2840.200 604.80L2847.350 611.95L2854.500 604.80" fill="none" stroke="#b1b3b6" stroke-width="2.100" stroke-linecap="round" stroke-linejoin="miter"/></svg>
<div style="position:absolute;left:2182px;top:678px;width:696px;height:2px;background:#eceef0;"></div>
<div style="position:absolute;top:727px;font-size:28px;line-height:28px;color:#1f2933;white-space:nowrap;left:2229.80px;font-weight:bold;letter-spacing:-0.27px;">Industry</div>
<div style="position:absolute;left:2230px;top:792px;width:653px;height:76px;background:#f9fafb;border:2px solid #e6e8eb;border-radius:8px;"></div>
<div style="position:absolute;top:817px;font-size:28px;line-height:28px;color:#1f2933;white-space:nowrap;left:2255.50px;-webkit-text-stroke:0.22px #1f2933;">All Industries</div>
<svg style="position:absolute;left:0px;top:0px;overflow:visible;" width="1" height="1" viewBox="0 0 1 1"><path d="M2840.200 821.80L2847.350 814.65L2854.500 821.80M2840.200 836.80L2847.350 843.95L2854.500 836.80" fill="none" stroke="#b1b3b6" stroke-width="2.100" stroke-linecap="round" stroke-linejoin="miter"/></svg>
</div></body></html>
